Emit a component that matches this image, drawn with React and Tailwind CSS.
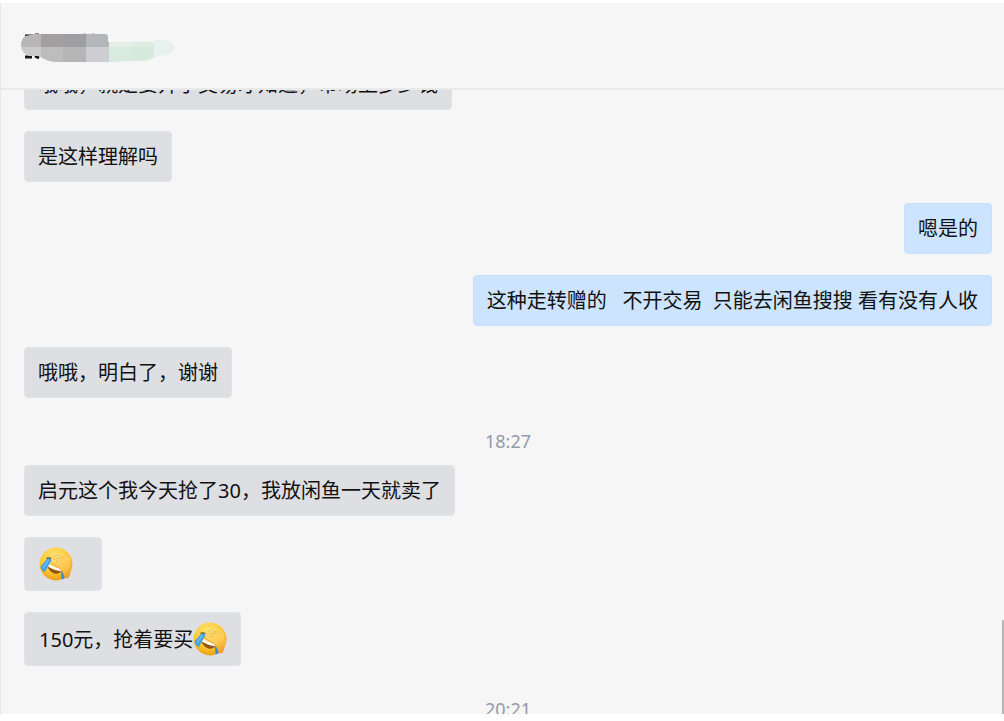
const messages = [
  {
    id: 1,
    from: "them",
    text: "哦哦，就是要开了交易才知道，市场上多少钱",
  },
  { id: 2, from: "them", text: "是这样理解吗" },
  { id: 3, from: "me", text: "嗯是的" },
  {
    id: 4,
    from: "me",
    text: "这种走转赠的   不开交易  只能去闲鱼搜搜 看有没有人收",
  },
  { id: 5, from: "them", text: "哦哦，明白了，谢谢" },
  { id: 6, time: "18:27" },
  {
    id: 7,
    from: "them",
    text: "启元这个我今天抢了30，我放闲鱼一天就卖了",
  },
  { id: 8, from: "them", text: "", emoji: true },
  { id: 9, from: "them", text: "150元，抢着要买", emoji: true },
  { id: 10, time: "20:21" },
];

/* ================= ICONS ================= */

const FacepalmEmoji = () => (
  <svg
    viewBox="0 0 34 34"
    className="w-[34px] h-[34px] shrink-0"
    role="img"
    aria-label="捂脸"
  >
    <defs>
      <radialGradient id="face" cx="0.45" cy="0.3" r="0.75">
        <stop offset="0" stopColor="#ffe781" />
        <stop offset="0.6" stopColor="#fdc72c" />
        <stop offset="1" stopColor="#eb9414" />
      </radialGradient>
      <linearGradient id="hand" x1="0.2" y1="0" x2="0.8" y2="1">
        <stop offset="0" stopColor="#ffe07a" />
        <stop offset="0.6" stopColor="#fdc850" />
        <stop offset="1" stopColor="#f09a28" />
      </linearGradient>
    </defs>
    <circle cx="17" cy="17" r="16.4" fill="url(#face)" />
    <path d="M8.5 19.5 Q15 23 22.5 23.5 Q20 27.5 15.5 26.5 Q10.5 25 8.5 19.5Z" fill="#94540f" />
    <path d="M9.5 17 Q16 20.5 22.5 22 L22 24.2 Q14 23 9 19.5Z" fill="#fffaf0" />
    <path
      d="M10.5 11 Q15 6.5 22 7 Q28 7.500 31 11.5 Q32.8 19 31.5 26 Q30.500 31.5 27 31.5 Q24.5 29 23 24 Q21 20.500 16 18.8 Q12 17 11.500 14Z"
      fill="url(#hand)"
    />
    <path
      d="M11.5 14.5 Q13 17.500 16.5 19 Q21.500 21 23.2 24.5 Q24.500 28.500 26.5 31"
      fill="none"
      stroke="#dc9228"
      strokeWidth="0.7"
    />
    <path
      d="M12 11 Q16 8 20 8.500 M14 13 Q19 10 24 12 M21 10 Q25 9 28 11 M17 14.500 L20 14"
      fill="none"
      stroke="#dba63c"
      strokeWidth="0.7"
      strokeDasharray="2 1"
    />
    <path d="M7.500 11.500 Q10 10 12 12" fill="none" stroke="#5e3b10" strokeWidth="1.300" />
    <path d="M8.500 11.5 Q12 10.5 12.3 13.500 L6 25 Q2 23.5 1.500 19.500Z" fill="#46a0e2" />
    <path d="M9.500 13 L4 21" stroke="#6fbdf0" strokeWidth="1.500" />
    <path d="M21.500 24 Q24.500 25 25.500 31.500 L22.500 32.500 Q22.5 28 21.500 24Z" fill="#348fd8" />
  </svg>
);

// pixelated contact name
const MaskedName = () => (
  <svg
    viewBox="0 0 154 30"
    className="w-[154px] h-[30px]"
    role="img"
    aria-label="已隐藏的联系人"
  >
    <defs>
      <clipPath id="stroke">
        <path d="M4 3 L14 1 H84 Q87 1 87 4 V9 H134 V7 H144 Q153 8 153 15 Q153 21 143 22 L131 25 Q128 28 120 28 H100 V29 H33 Q25 28 18 23 H8 Q0 20 0 13 Q0 6 4 3Z" />
      </clipPath>
    </defs>
    <path d="M4 3 H12 M14 2 H18 M4 24 H11 M14 23 L18 25" stroke="#151515" strokeWidth="3" />
    <path d="M62 0 H65 M70 0 H74" stroke="#d5c9ce" strokeWidth="2" />
    <g clipPath="url(#stroke)" shapeRendering="crispEdges">
      <rect width="20" height="14" fill="#b7b5b5" />
      <rect x="20" width="22" height="14" fill="#a29fa0" />
      <rect x="42" width="23" height="14" fill="#9f9ea2" />
      <rect x="65" width="23" height="14" fill="#b3b7bb" />
      <rect y="14" width="20" height="16" fill="#cacaca" />
      <rect x="20" y="14" width="22" height="16" fill="#bdbdbd" />
      <rect x="42" y="14" width="23" height="16" fill="#b6b5b5" />
      <rect x="65" y="14" width="23" height="16" fill="#cdced1" />
      <rect x="88" width="22" height="14" fill="#e5efe8" />
      <rect x="110" width="23" height="14" fill="#dfece2" />
      <rect x="88" y="14" width="22" height="16" fill="#d9ebdf" />
      <rect x="110" y="14" width="23" height="16" fill="#d6eadb" />
      <rect x="133" width="21" height="30" fill="#e9f1ee" />
    </g>
  </svg>
);

/* ================= MESSAGES ================= */

const Bubble = ({ message }) => {
  const mine = message.from === "me";

  return (
    <li className={mine ? "flex justify-end" : "flex justify-start"}>
      <div
        className={`flex items-center rounded border text-xl leading-[25px] whitespace-pre text-[#111] ${
          mine
            ? "bg-[#cce4fd] border-[#c5dfff]"
            : "bg-[#dedfe3] border-[#e2e3e7]"
        } ${message.emoji ? "pl-[14px] py-[9px]" : "px-[13px] py-3"} ${
          message.emoji && !message.text ? "pr-[28px]" : "pr-[13px]"
        }`}
      >
        {message.text}
        {message.emoji && <FacepalmEmoji />}
      </div>
    </li>
  );
};

const TimeStamp = ({ time }) => (
  <li className="flex justify-center pt-[10px] -mb-[10px] text-lg leading-[25px] text-[#929baa]">
    <time>{time}</time>
  </li>
);

const App = () => {
  return (
    <div className="h-screen bg-white pt-[3px] pb-[7px] font-['Noto_Sans','Noto_Sans_CJK_SC',sans-serif]">
      <div className="flex flex-col h-full bg-[#f6f6f6] border-l border-[#e8e8e8]">
        {/* HEADER */}
        <header className="flex shrink-0 items-center h-[87px] pt-1 pl-5 border-b-2 border-[#e9e9e9]">
          <MaskedName />
        </header>

        {/* CHAT */}
        <main className="relative flex-1 min-h-0 overflow-hidden">
          <ul className="flex flex-col gap-[21px] -mt-[31px] pl-[23px] pr-3">
            {messages.map((message) =>
              message.time ? (
                <TimeStamp key={message.id} time={message.time} />
              ) : (
                <Bubble key={message.id} message={message} />
              )
            )}
          </ul>

          {/* SCROLLBAR */}
          <div className="absolute right-0 bottom-0 w-[2px] h-[94px] rounded-t bg-[#b5b5b5]" />
        </main>
      </div>
    </div>
  );
};

export default App;
